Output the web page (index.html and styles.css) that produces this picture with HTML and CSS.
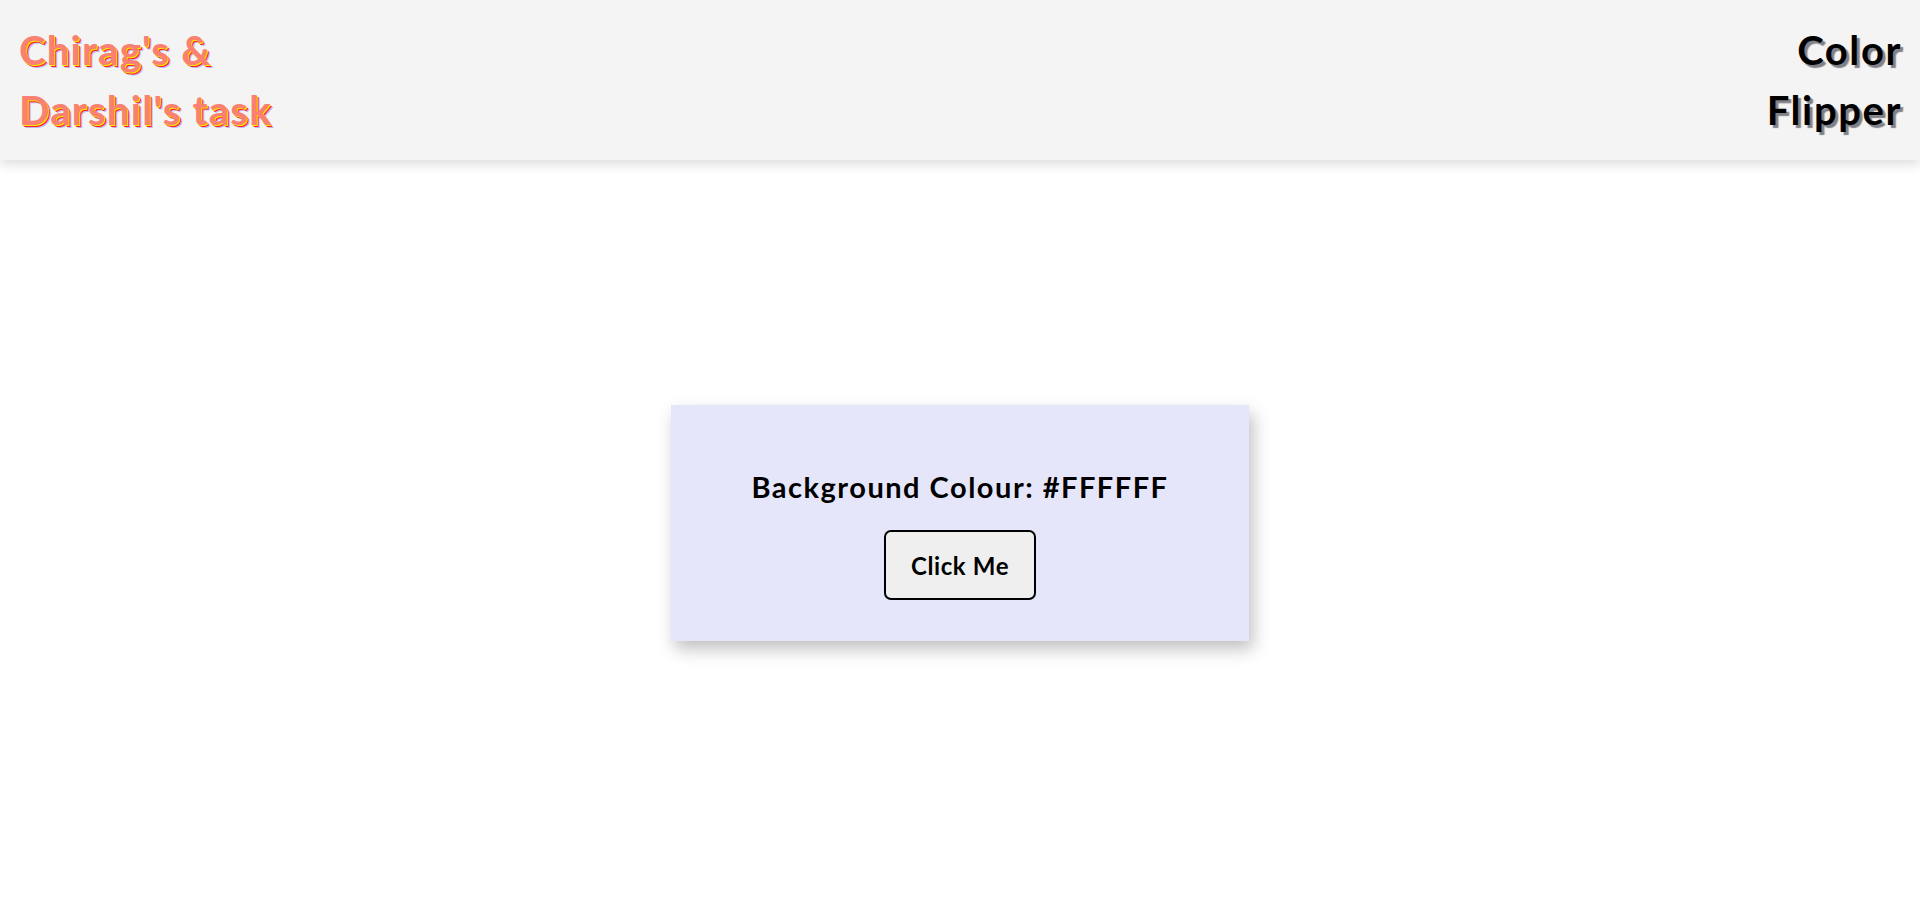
FILE: index.html
```html
<!DOCTYPE html>
<html lang="en">
<head>
<meta charset="utf-8">
<title>Color Flipper</title>
<link rel="stylesheet" href="styles.css">
</head>
<body>
  <header class="topbar">
    <h1 class="brand">Chirag's &amp;<br>Darshil's task</h1>
    <h1 class="title">Color<br>Flipper</h1>
  </header>
  <main class="stage">
    <section class="card">
      <h2 class="card-text">Background Colour: #FFFFFF</h2>
      <button class="flip-btn" type="button">Click Me</button>
    </section>
  </main>
</body>
</html>
```
FILE: styles.css
```css
* { box-sizing: border-box; }

html, body {
  margin: 0;
  padding: 0;
}

body {
  background: #ffffff;
  font-family: Lato, "Open Sans", sans-serif;
  color: #000;
  min-height: 100vh;
}

.topbar {
  height: 160px;
  background: #f4f4f4;
  display: flex;
  justify-content: space-between;
  align-items: flex-start;
  padding: 20px 18px 20px 19px;
  box-shadow: 0 5px 10px rgba(0, 0, 0, 0.12);
  position: relative;
  z-index: 1;
}

.brand,
.title {
  margin: 0;
  font-size: 40px;
  line-height: 60px;
  font-weight: 700;
  letter-spacing: 1.3px;
}

.brand {
  color: #fa8072;
  text-shadow: 1px 1px #ffe800, 2px 2px #ff2020, 3px 3px rgba(120, 110, 230, 0.45);
}

.title {
  text-align: right;
  color: #000;
  letter-spacing: 1.6px;
  text-shadow: 3px 3px 1px rgba(90, 90, 100, 0.75);
}

.stage {
  display: flex;
  justify-content: center;
  padding-top: 245px;
}

.card {
  width: 578px;
  height: 236px;
  background: #e6e6fa;
  box-shadow: 4px 8px 16px rgba(0, 0, 0, 0.25);
  display: flex;
  flex-direction: column;
  align-items: center;
  padding-top: 65px;
}

.card-text {
  margin: 0;
  font-size: 29px;
  line-height: 34px;
  font-weight: 700;
  letter-spacing: 1.5px;
}

.flip-btn {
  margin-top: 26px;
  width: 152px;
  height: 70px;
  background: #efefef;
  border: 2px solid #000;
  border-radius: 7px;
  font-family: Lato, "Open Sans", sans-serif;
  font-size: 24px;
  font-weight: 700;
  letter-spacing: 0.6px;
  color: #000;
  padding: 0;
  cursor: pointer;
}
```
